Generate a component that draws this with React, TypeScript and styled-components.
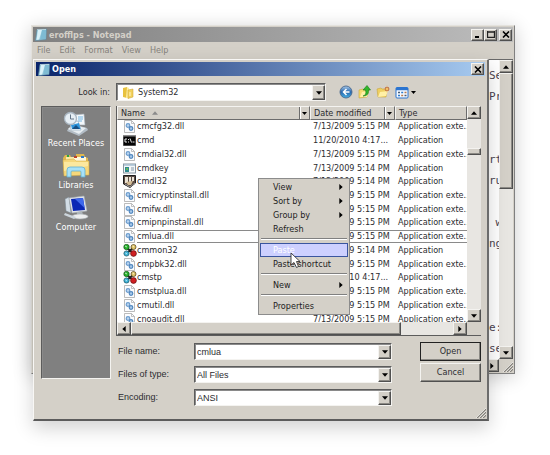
import React from "react";
import styled, { createGlobalStyle, css } from "styled-components";

const face = "#d4d0c8";
const ui = `"DejaVu Sans Condensed", "Noto Sans", sans-serif`;
const sans = `"Liberation Sans", Arial, sans-serif`;

const Global = createGlobalStyle`
  *, *::before, *::after { box-sizing: border-box; }
  body { margin: 0; background: #fff; font: 9px/13px ${ui}; color: #2c2c30; }
  button, input, select { font: inherit; color: inherit; margin: 0; padding: 0; }
  svg { display: block; flex: none; }
`;

const raised = css`
  background: ${face};
  border: 1px solid;
  border-color: #f4f3f0 #505050 #505050 #f4f3f0;
  box-shadow: inset -1px -1px 0 #8c8a85;
`;

const sunken = css`
  background: #fff;
  border: 1px solid;
  border-color: #5c5c5c #f4f3f0 #f4f3f0 #5c5c5c;
  box-shadow: inset 1px 1px 0 #8a8a8a;
`;

const Desktop = styled.main`
  position: relative;
  min-height: 455px;
  padding: 25px 35px 0 31px;
`;

const NotepadWindow = styled.section`
  display: flex;
  flex-direction: column;
  min-height: 348px;
  padding: 1px;
  background: ${face};
  border: 1px solid;
  border-color: #e4e2dd #808080 #808080 #e4e2dd;
  box-shadow: 0 3px 18px rgba(0, 0, 0, 0.2);
`;

const DialogWindow = styled.section`
  position: absolute;
  top: 59px;
  left: 33px;
  right: 61px;
  padding: 2px;
  background: ${face};
  border: solid;
  border-width: 1px 2px 2px 1px;
  border-color: #f8f7f5 #6c6c6c #5c5c5c #f8f7f5;
  box-shadow: 0 7px 18px rgba(0, 0, 0, 0.18);
`;

const TitleBar = styled.header<{ $active?: boolean }>`
  display: flex;
  align-items: center;
  gap: 2px;
  height: ${(p) => (p.$active ? 14 : 15)}px;
  padding: 0 1px 0 2px;
  color: ${(p) => (p.$active ? "#fff" : "#d4d0c8")};
  background: ${(p) =>
    p.$active
      ? "linear-gradient(90deg, #0a246a, #a6caf0)"
      : "linear-gradient(90deg, #808080, #bdbdbd)"};
`;

const Title = styled.h1`
  flex: 1;
  margin: 0;
  font-size: 9px;
  line-height: 14px;
  font-weight: bold;
`;

const CaptionButton = styled.button<{ $spaced?: boolean }>`
  ${raised}
  display: flex;
  align-items: center;
  justify-content: center;
  width: 13px;
  height: 12px;
  margin-left: ${(p) => (p.$spaced ? 0 : -2)}px;
`;

const MenuBar = styled.nav`
  display: flex;
  gap: 9px;
  height: 17px;
  padding: 1px 4px;
`;

const MenuButton = styled.button`
  border: 0;
  background: none;
  color: #85827c;
`;

const Client = styled.div`
  flex: 1;
  display: flex;
  min-height: 0;
  border: solid #6a6a6a;
  border-width: 1px 0 0;
`;

const EditorColumn = styled.div`
  flex: 1;
  display: flex;
  flex-direction: column;
  min-width: 0;
  background: #fff;
`;

const EditorText = styled.pre`
  flex: 1;
  height: 0;
  margin: 0;
  padding: 5px 0 0 calc(100% - 10px);
  overflow: hidden;
  font: 11px/21px "DejaVu Sans Mono", monospace;
  color: #4c4350;
`;

const ScrollColumn = styled.div`
  display: flex;
  flex-direction: column;
  width: 14px;
  background: #e8e6e2;
`;

const ScrollRow = styled.div`
  display: flex;
  height: 13px;
  background: #e8e6e2;
`;

const ScrollArrow = styled.button`
  ${raised}
  flex: none;
  display: flex;
  align-items: center;
  justify-content: center;
  width: 14px;
  height: 13px;
`;

const Track = styled.div<{ $lead: number; $thumb: number; $rest: number }>`
  flex: 1;
  display: grid;
  grid-template-rows: ${(p) => `${p.$lead}fr ${p.$thumb}fr ${p.$rest}fr`};
`;

const RowTrack = styled.div`
  flex: 1;
  display: grid;
  grid-template-columns: 273fr 53fr;
`;

const Thumb = styled.div`
  ${raised}
`;

const GripCorner = styled.div`
  display: flex;
  align-items: flex-end;
  justify-content: flex-end;
  height: 13px;
  background: ${face};
`;

const LookRow = styled.div`
  display: flex;
  align-items: center;
  padding: 7px 4px 5px 5px;
`;

const LookLabel = styled.label`
  width: 75px;
  padding-right: 6px;
  text-align: right;
`;

const Combo = styled.div<{ $fixed?: boolean }>`
  ${sunken}
  display: flex;
  align-items: center;
  flex: ${(p) => (p.$fixed ? "0 1 210px" : "1")};
  min-width: 0;
  height: ${(p) => (p.$fixed ? 18 : 17)}px;
  padding: 1px 0 0 ${(p) => (p.$fixed ? 5 : 2)}px;
  gap: 4px;
`;

const ComboSelect = styled.select<{ $sans?: boolean }>`
  flex: 1;
  min-width: 0;
  height: 14px;
  border: 0;
  background: none;
  appearance: none;
  outline: 0;
  font-family: ${(p) => (p.$sans ? sans : ui)};
`;

const ComboInput = styled.input`
  flex: 1;
  min-width: 0;
  height: 14px;
  border: 0;
  background: none;
  outline: 0;
  font-family: ${sans};
`;

const DropFace = styled.span`
  ${raised}
  flex: none;
  display: flex;
  align-items: center;
  justify-content: center;
  width: 13px;
  align-self: stretch;
`;

const Tools = styled.div`
  display: flex;
  align-items: center;
  gap: 5px;
  margin-left: 13px;
`;

const ToolButton = styled.button`
  display: flex;
  align-items: center;
  gap: 2px;
  border: 0;
  background: none;
`;

const DialogBody = styled.div`
  display: flex;
  gap: 5px;
  padding: 0 4px 11px 5px;
`;

const Places = styled.nav`
  ${sunken}
  width: 70px;
  align-self: flex-start;
  min-height: 273px;
  padding: 4px 0;
  background: #808080;
  display: flex;
  flex-direction: column;
  gap: 1px;
`;

const Place = styled.button`
  display: flex;
  flex-direction: column;
  align-items: center;
  gap: 1px;
  height: 41px;
  border: 0;
  background: none;
  color: #fff;
  white-space: nowrap;
`;

const Main = styled.div`
  flex: 1;
  min-width: 0;
`;

const ListBox = styled.div`
  border: solid #5c5c5c;
  border-width: 0 0 1px 1px;
  background: ${face};
`;

const ListTop = styled.div`
  display: flex;
  height: 216px;
`;

const ListView = styled.div`
  flex: 1;
  min-width: 0;
  overflow: hidden;
  background: #fff;
`;

const FileTable = styled.table`
  width: 100%;
  height: 220px;
  table-layout: fixed;
  border-spacing: 0;
`;

const HeadCell = styled.th<{ $width?: number }>`
  width: ${(p) => (p.$width ? `${p.$width}px` : "auto")};
  height: 14px;
  padding: 0 0 0 3px;
  font-weight: normal;
  text-align: left;
  background: ${face};
  border: 1px solid;
  border-color: #f4f3f0 #6c6c6c #6c6c6c #f4f3f0;
`;

const HeadContent = styled.div`
  display: flex;
  align-items: center;
  gap: 7px;
  height: 12px;
  line-height: 12px;
  white-space: nowrap;
`;

const HeadDrop = styled.span`
  display: flex;
  align-items: center;
  justify-content: center;
  width: 10px;
  height: 12px;
  margin-left: auto;
  border-left: 1px solid #6c6c6c;
  box-shadow: inset 1px 0 0 #fff;
`;

const Cell = styled.td<{ $focus?: boolean }>`
  padding: 0 0 0 3px;
  line-height: 11px;
  white-space: nowrap;
  border: solid ${(p) => (p.$focus ? "#8a8a8a" : "transparent")};
  border-width: 1px 0;
`;

const NameCell = styled(Cell)`
  padding-left: 5px;
  border-color: transparent;
`;

const NameContent = styled.div`
  display: flex;
  align-items: center;
  height: 11px;
`;

const IconSlot = styled.span`
  display: flex;
  justify-content: center;
  width: 15px;
  margin: -1px 0;
`;

const NameText = styled.span<{ $focus?: boolean }>`
  flex: 1;
  line-height: 11px;
  margin: -1px 0;
  border: solid ${(p) => (p.$focus ? "#8a8a8a" : "transparent")};
  border-width: 1px 0;
`;

const Corner = styled.div`
  width: 14px;
  background: ${face};
`;

const Form = styled.form`
  display: flex;
  gap: 28px;
  padding-top: 6px;
`;

const Fields = styled.div`
  flex: 1;
  display: grid;
  gap: 6px;
  padding-top: 1px;
`;

const Field = styled.div`
  display: flex;
  align-items: center;
`;

const FieldLabel = styled.label`
  width: 78px;
  padding-left: 2px;
  font-family: ${sans};
`;

const Actions = styled.div`
  display: flex;
  flex-direction: column;
  gap: 2px;
  width: 61px;
`;

const ActionButton = styled.button<{ $default?: boolean }>`
  ${raised}
  height: 19px;
  ${(p) => p.$default && css`border-color: #222;`}
`;

const DialogGrip = styled.div`
  position: absolute;
  right: 1px;
  bottom: 1px;
`;

const ContextMenu = styled.div`
  position: absolute;
  top: 178px;
  left: 258px;
  width: 92px;
  padding: 1px;
  background: ${face};
  border: 1px solid #8c8c8c;
`;

const ContextItem = styled.button<{ $selected?: boolean }>`
  display: flex;
  align-items: center;
  justify-content: space-between;
  width: 100%;
  height: 14px;
  padding: 0 4px 0 12px;
  border: 1px solid ${(p) => (p.$selected ? "#3a559f" : "transparent")};
  background: ${(p) => (p.$selected ? "#cdd0ff" : "none")};
  color: ${(p) => (p.$selected ? "#fff" : "#222")};
  line-height: 12px;
  white-space: nowrap;
`;

const Separator = styled.hr`
  height: 2px;
  margin: 2px 1px 3px;
  border: solid;
  border-width: 1px 0;
  border-color: #808080 #fff #fff;
`;

const Pointer = styled.div`
  position: absolute;
  top: 252px;
  left: 290px;
`;

const paths = {
  up: "M0 4L3.500 0L7 4Z",
  down: "M0 0H7L3.500 4Z",
  left: "M4 0V7L0 3.500Z",
  right: "M0 0V7L4 3.500Z",
};

function Arrow({ dir, size = 6, color = "#000" }: { dir: keyof typeof paths; size?: number; color?: string }) {
  const flat = dir === "up" || dir === "down";
  const short = Math.ceil((size * 4) / 7);
  return (
    <svg width={flat ? size : short} height={flat ? short : size} viewBox={flat ? "0 0 7 4" : "0 0 4 7"}>
      <path d={paths[dir]} fill={color} />
    </svg>
  );
}

const Cross = () => (
  <svg width="8" height="7" viewBox="0 0 8 7">
    <path d="M1 0.500L7 6.500M7 0.500L1 6.500" stroke="#000" strokeWidth="1.600" />
  </svg>
);

const Grip = () => (
  <svg width="11" height="11" viewBox="0 0 11 11">
    <path d="M2 11L11 2M5 11L11 5M8 11L11 8" stroke="#85827c" strokeWidth="1.300" />
    <path d="M1 11L11 1M4 11L11 4M7 11L11 7" stroke="#fff" strokeWidth="0.600" />
  </svg>
);

const NotepadIcon = () => (
  <svg width="12" height="13" viewBox="0 0 12 13">
    <path d="M2 1.500L11.500 1L11 11.500L0.500 12.500Z" fill="#9fd0e2" stroke="#5e8ba0" strokeWidth="0.700" />
    <path d="M3 2L7 2L4 11.500L1.500 12Z" fill="#d9f1f8" />
    <path d="M7 2L11 2L10.500 11L5 11.500Z" fill="#69aec9" opacity="0.600" />
    <path d="M2.500 1.500H11" stroke="#eef8fb" strokeDasharray="1 1" />
  </svg>
);

const FolderIcon = () => (
  <svg width="12" height="13" viewBox="0 0 12 13">
    <path d="M1 2L5 1V12L1 11Z" fill="#e8c23f" />
    <path d="M5 1L7 2V12.500L4 12Z" fill="#fff0a0" />
    <path d="M6 4L11 3V11L6 12.500Z" fill="#f2d15c" stroke="#c89f2c" strokeWidth="0.500" />
    <path d="M8 6V10" stroke="#fff7c9" />
  </svg>
);

const BackIcon = () => (
  <svg width="14" height="14" viewBox="0 0 14 14">
    <defs>
      <linearGradient id="back" x2="0" y2="1">
        <stop stopColor="#a9c9e8" />
        <stop offset="0.500" stopColor="#2767ae" />
        <stop offset="1" stopColor="#49b1e2" />
      </linearGradient>
    </defs>
    <circle cx="7" cy="7" r="6" fill="url(#back)" stroke="#49688c" strokeWidth="0.900" />
    <path d="M7.500 4L4.500 7L7.500 10M5 7H10.500" fill="none" stroke="#fff" strokeWidth="1.500" />
  </svg>
);

const UpIcon = () => (
  <svg width="13" height="14" viewBox="0 0 13 14">
    <path d="M1 5L5 4L6 5L11 5L9 12L1 13Z" fill="#f5db70" stroke="#c9a73c" strokeWidth="0.600" />
    <path d="M2 12L4 7L11 6L9 12Z" fill="#fff0a8" />
    <path d="M5 11Q9 10 7.500 5H5L9 0.500L12.500 5H10.500Q11 11 5 11Z" fill="#32b72c" stroke="#177a19" strokeWidth="0.600" />
  </svg>
);

const NewFolderIcon = () => (
  <svg width="14" height="14" viewBox="0 0 14 14">
    <path d="M1 4L5 3L6 4L11 4L10 12L2 12Z" fill="#efcf61" stroke="#c8a63d" strokeWidth="0.600" />
    <path d="M2 12L4 7L12 6L10 11Z" fill="#fff0a6" />
    <circle cx="11" cy="4" r="1.800" fill="#f7d36b" stroke="#b96a43" strokeWidth="1.100" />
    <path d="M11 0.500V7.500M7.500 4H14" stroke="#e9aa65" strokeWidth="0.500" />
  </svg>
);

const ViewsIcon = () => (
  <svg width="14" height="13" viewBox="0 0 13 13">
    <rect x="0.500" y="1.500" width="12" height="10.500" rx="1" fill="#f6faff" stroke="#2b74d0" />
    <path d="M0.500 3H12.500" stroke="#2b74d0" strokeWidth="2.500" />
    <path d="M2.500 6.500H4.500M9 9.500H11" stroke="#4a5e78" strokeWidth="1.600" />
    <path d="M5.700 6.500H7.700M2.500 9.500H4.500" stroke="#2d7acb" strokeWidth="1.600" />
    <path d="M9 6.500H11M5.700 9.500H7.700" stroke="#b47a52" strokeWidth="1.600" />
  </svg>
);

const RecentIcon = () => (
  <svg width="26" height="25" viewBox="0 0 26 25">
    <path d="M5 18L10 13L24 17L25 19L16 25L4 20Z" fill="#b3bdc6" />
    <path d="M5 18L10 14L23 17L16 23Z" fill="#e7edf1" />
    <path d="M10 4L21 3L22 14L11 14Z" fill="#f4f8fb" stroke="#a2acb5" strokeWidth="0.600" />
    <path d="M15 6H20M15 8H20M15 10H19" stroke="#72b4e0" />
    <path d="M7 11L15 10L18 19L8 19Z" fill="#f5fbff" stroke="#8ba5ba" strokeWidth="0.600" />
    <path d="M8 14L16 12L17.500 18L9 18Z" fill="#2e95db" />
    <path d="M9 18L13 14L17 18Z" fill="#174f83" />
    <circle cx="7.500" cy="7.500" r="6" fill="#e7eff5" stroke="#a8b5c0" strokeWidth="1.300" />
    <path d="M7.500 3.500V8H11" fill="none" stroke="#647789" />
  </svg>
);

const LibrariesIcon = () => (
  <svg width="28" height="25" viewBox="0 0 28 25">
    <path d="M1 5L3 2H8L9 4H14V1H22L23 4L26 5V22H2Z" fill="#dfb74f" />
    <path d="M4 4H12V8H4Z" fill="#f9e9a8" />
    <path d="M12 4H24V9H12Z" fill="#fff8dc" />
    <path d="M5 3H7" stroke="#2ba343" strokeWidth="2" />
    <path d="M12 4H15" stroke="#bb4229" strokeWidth="2" />
    <path d="M19 4H22" stroke="#2d79cc" strokeWidth="2" />
    <path d="M1 7L12 6L14 8H27V22L2 23Z" fill="#f6d77b" stroke="#d2a83f" strokeWidth="0.500" />
    <path d="M2 9H26V13L2 18Z" fill="#fff0af" opacity="0.700" />
    <path d="M5 24V17Q5 14 8 14H20Q23 14 23 17V24H19V19Q19 18 18 18H10Q9 18 9 19V24Z" fill="#a8e1f7" stroke="#5faed3" strokeWidth="0.800" />
  </svg>
);

const ComputerIcon = () => (
  <svg width="26" height="25" viewBox="0 0 26 25">
    <path d="M2 4L6 2L8 18L3 16Z" fill="#d3dde6" stroke="#77858f" strokeWidth="0.500" />
    <path d="M6 3L21 1L24 16L9 18Z" fill="#e2e5e8" stroke="#a2abb2" strokeWidth="0.600" />
    <path d="M8 4L20 3L22 15L10 16Z" fill="#0b27b5" />
    <path d="M12 4L20 3L21.500 13Z" fill="#3e68ec" />
    <path d="M14 17L19 16L20 20H14Z" fill="#aeb6bb" />
    <ellipse cx="17" cy="21.500" rx="8" ry="2.500" fill="#eceeef" stroke="#a6adb1" strokeWidth="0.600" />
    <path d="M2 18L13 22L11 24L1 20Z" fill="#ccd5dc" />
  </svg>
);

type Kind = "dll" | "console" | "app" | "shield" | "balls";

function FileIcon({ kind }: { kind: Kind }) {
  if (kind === "console")
    return (
      <svg width="13" height="11" viewBox="0 0 13 11">
        <rect width="13" height="11" fill="#8b8b8b" />
        <rect x="0.500" y="1.500" width="12" height="9" fill="#050505" />
        <path d="M4 4H2V7H4M5.500 4V5M5.500 6.500V7.500M7 3.500L8.500 7.500M9.500 7H11.500" fill="none" stroke="#fff" strokeWidth="0.900" />
      </svg>
    );
  if (kind === "app")
    return (
      <svg width="13" height="11" viewBox="0 0 13 11">
        <rect x="0.500" y="1" width="12" height="9" fill="#f5f8f9" stroke="#8896a0" />
        <path d="M1 2H12" stroke="#a7c0d3" strokeWidth="1.500" />
        <rect x="2" y="4" width="4" height="5" fill="#318a8d" />
        <rect x="3" y="5" width="2" height="2" fill="#65b85b" />
        <path d="M8 5H11M8 7H11" stroke="#8398aa" />
      </svg>
    );
  if (kind === "shield")
    return (
      <svg width="13" height="13" viewBox="0 0 13 13">
        <path d="M0.500 0.500H12.500V8L7 12.500L0.500 9Z" fill="#5b4b43" stroke="#1d1d1d" />
        <path d="M2 2H5V8H2ZM6 2H8V7H6ZM9 2H11V6H9Z" fill="#ebe4d6" />
        <path d="M3 7L10 6L8 10L5 10Z" fill="#d4bd96" />
        <path d="M2 9L7 12L12 8" fill="none" stroke="#999" />
      </svg>
    );
  if (kind === "balls")
    return (
      <svg width="14" height="13" viewBox="0 0 14 13">
        <path d="M4 4L10 9M10 4L4 9" stroke="#222" strokeWidth="2" />
        <circle cx="3.500" cy="3" r="2.700" fill="#28b52c" stroke="#134d17" strokeWidth="0.700" />
        <circle cx="10.500" cy="3" r="2.500" fill="#e0c568" stroke="#4a3a14" strokeWidth="0.700" />
        <circle cx="3.500" cy="9.500" r="2.600" fill="#40b5d8" stroke="#164f61" strokeWidth="0.700" />
        <circle cx="10.500" cy="9.500" r="2.900" fill="#d01f22" stroke="#5f1010" strokeWidth="0.700" />
        <path d="M2 2L4 3M9.500 2L11 3M2.500 9L4 10" stroke="#fff" strokeWidth="0.700" />
      </svg>
    );
  return (
    <svg width="11" height="13" viewBox="0 0 11 13">
      <path d="M0.500 0.500H7.500L10.500 3.500V12.500H0.500Z" fill="#fbfcfe" stroke="#aaa" strokeWidth="0.800" />
      <path d="M7.500 0.500V3.500H10.500" fill="none" stroke="#aaa" strokeWidth="0.700" />
      <circle cx="4" cy="5.500" r="1.800" fill="#b9d4ee" stroke="#6c9ccd" strokeWidth="1.200" />
      <circle cx="7" cy="8.500" r="1.800" fill="#a9c9e8" stroke="#4f86be" strokeWidth="1.200" />
    </svg>
  );
}

const day = "7/13/2009 5:15 PM";
const earlier = "7/13/2009 5:14 PM";
const later = "11/20/2010 4:17...";
const app = "Application";
const ext = "Application exte..";

const files: { name: string; kind: Kind; date: string; type: string; focus?: boolean }[] = [
  { name: "cmcfg32.dll", kind: "dll", date: day, type: ext },
  { name: "cmd", kind: "console", date: later, type: app },
  { name: "cmdial32.dll", kind: "dll", date: day, type: ext },
  { name: "cmdkey", kind: "app", date: earlier, type: app },
  { name: "cmdl32", kind: "shield", date: earlier, type: app },
  { name: "cmicryptinstall.dll", kind: "dll", date: day, type: ext },
  { name: "cmifw.dll", kind: "dll", date: day, type: ext },
  { name: "cmipnpinstall.dll", kind: "dll", date: day, type: ext },
  { name: "cmlua.dll", kind: "dll", date: day, type: ext, focus: true },
  { name: "cmmon32", kind: "balls", date: earlier, type: app },
  { name: "cmpbk32.dll", kind: "dll", date: day, type: ext },
  { name: "cmstp", kind: "balls", date: later, type: app },
  { name: "cmstplua.dll", kind: "dll", date: day, type: ext },
  { name: "cmutil.dll", kind: "dll", date: day, type: ext },
  { name: "cnoaudit.dll", kind: "dll", date: day, type: ext },
];

const documentText = ["Se", "Pr", "", "", "rt", "ru", "", " w", "ng", "", "", "", "e:", "se"].join("\n");

function Notepad() {
  return (
    <NotepadWindow>
      <TitleBar>
        <NotepadIcon />
        <Title>erofflps - Notepad</Title>
        <CaptionButton aria-label="Minimize">
          <svg width="7" height="7" viewBox="0 0 7 7"><path d="M1 6H5" stroke="#000" strokeWidth="2" /></svg>
        </CaptionButton>
        <CaptionButton aria-label="Maximize">
          <svg width="8" height="7" viewBox="0 0 8 7"><path d="M0.500 0V6.500H7.500V0M0 1H8" fill="none" stroke="#222" strokeWidth="1.300" /></svg>
        </CaptionButton>
        <CaptionButton aria-label="Close" $spaced><Cross /></CaptionButton>
      </TitleBar>
      <MenuBar>
        {["File", "Edit", "Format", "View", "Help"].map((m) => <MenuButton key={m}>{m}</MenuButton>)}
      </MenuBar>
      <Client>
        <EditorColumn>
          <EditorText>{documentText}</EditorText>
          <ScrollRow>
            <Track $lead={0} $thumb={0} $rest={1} />
            <ScrollArrow aria-label="Scroll right"><Arrow dir="right" /></ScrollArrow>
          </ScrollRow>
        </EditorColumn>
        <ScrollColumn>
          <ScrollArrow aria-label="Scroll up"><Arrow dir="up" /></ScrollArrow>
          <Track $lead={0} $thumb={115} $rest={155}><span /><Thumb /></Track>
          <ScrollArrow aria-label="Scroll down"><Arrow dir="down" /></ScrollArrow>
          <GripCorner><Grip /></GripCorner>
        </ScrollColumn>
      </Client>
    </NotepadWindow>
  );
}

function FileList() {
  return (
    <ListBox>
      <ListTop>
        <ListView>
          <FileTable>
            <thead>
              <tr>
                <HeadCell>
                  <HeadContent>Name <Arrow dir="up" size={6} color="#8a8a8a" /><HeadDrop><Arrow dir="down" size={5} /></HeadDrop></HeadContent>
                </HeadCell>
                <HeadCell $width={85}>
                  <HeadContent>Date modified<HeadDrop><Arrow dir="down" size={5} /></HeadDrop></HeadContent>
                </HeadCell>
                <HeadCell $width={72}><HeadContent>Type</HeadContent></HeadCell>
              </tr>
            </thead>
            <tbody>
              {files.map((f) => (
                <tr key={f.name}>
                  <NameCell>
                    <NameContent>
                      <IconSlot><FileIcon kind={f.kind} /></IconSlot>
                      <NameText $focus={f.focus}>{f.name}</NameText>
                    </NameContent>
                  </NameCell>
                  <Cell $focus={f.focus}>{f.date}</Cell>
                  <Cell $focus={f.focus}>{f.type}</Cell>
                </tr>
              ))}
            </tbody>
          </FileTable>
        </ListView>
        <ScrollColumn>
          <ScrollArrow aria-label="Scroll up"><Arrow dir="up" /></ScrollArrow>
          <Track $lead={29} $thumb={7} $rest={154}><span /><Thumb /></Track>
          <ScrollArrow aria-label="Scroll down"><Arrow dir="down" /></ScrollArrow>
        </ScrollColumn>
      </ListTop>
      <ScrollRow>
        <ScrollArrow aria-label="Scroll left"><Arrow dir="left" /></ScrollArrow>
        <RowTrack><Thumb /></RowTrack>
        <ScrollArrow aria-label="Scroll right"><Arrow dir="right" /></ScrollArrow>
        <Corner />
      </ScrollRow>
    </ListBox>
  );
}

function OpenDialog() {
  return (
    <DialogWindow role="dialog" aria-label="Open">
      <TitleBar $active>
        <NotepadIcon />
        <Title>Open</Title>
        <CaptionButton aria-label="Close"><Cross /></CaptionButton>
      </TitleBar>
      <LookRow>
        <LookLabel htmlFor="look">Look in:</LookLabel>
        <Combo $fixed>
          <FolderIcon />
          <ComboSelect id="look"><option>System32</option></ComboSelect>
          <DropFace><Arrow dir="down" /></DropFace>
        </Combo>
        <Tools>
          <ToolButton aria-label="Back"><BackIcon /></ToolButton>
          <ToolButton aria-label="Up one level"><UpIcon /></ToolButton>
          <ToolButton aria-label="New folder"><NewFolderIcon /></ToolButton>
          <ToolButton aria-label="Views"><ViewsIcon /><Arrow dir="down" size={5} /></ToolButton>
        </Tools>
      </LookRow>
      <DialogBody>
        <Places>
          <Place><RecentIcon />Recent Places</Place>
          <Place><LibrariesIcon />Libraries</Place>
          <Place><ComputerIcon />Computer</Place>
        </Places>
        <Main>
          <FileList />
          <Form onSubmit={(e) => e.preventDefault()}>
            <Fields>
              <Field>
                <FieldLabel htmlFor="name">File name:</FieldLabel>
                <Combo><ComboInput id="name" defaultValue="cmlua" /><DropFace><Arrow dir="down" /></DropFace></Combo>
              </Field>
              <Field>
                <FieldLabel htmlFor="type">Files of type:</FieldLabel>
                <Combo><ComboSelect id="type" $sans><option>All Files</option></ComboSelect><DropFace><Arrow dir="down" /></DropFace></Combo>
              </Field>
              <Field>
                <FieldLabel htmlFor="encoding">Encoding:</FieldLabel>
                <Combo><ComboSelect id="encoding" $sans><option>ANSI</option></ComboSelect><DropFace><Arrow dir="down" /></DropFace></Combo>
              </Field>
            </Fields>
            <Actions>
              <ActionButton type="submit" $default>Open</ActionButton>
              <ActionButton type="button">Cancel</ActionButton>
            </Actions>
          </Form>
        </Main>
      </DialogBody>
      <DialogGrip><Grip /></DialogGrip>
    </DialogWindow>
  );
}

export default function App() {
  return (
    <Desktop>
      <Global />
      <Notepad />
      <OpenDialog />
      <ContextMenu role="menu">
        <ContextItem role="menuitem">View<Arrow dir="right" /></ContextItem>
        <ContextItem role="menuitem">Sort by<Arrow dir="right" /></ContextItem>
        <ContextItem role="menuitem">Group by<Arrow dir="right" /></ContextItem>
        <ContextItem role="menuitem">Refresh</ContextItem>
        <Separator />
        <ContextItem role="menuitem" $selected>Paste</ContextItem>
        <ContextItem role="menuitem">Paste shortcut</ContextItem>
        <Separator />
        <ContextItem role="menuitem">New<Arrow dir="right" /></ContextItem>
        <Separator />
        <ContextItem role="menuitem">Properties</ContextItem>
      </ContextMenu>
      <Pointer>
        <svg width="13" height="17" viewBox="0 0 13 17">
          <path d="M1 1V13L4 10.500L6.500 15.500L8.500 14.500L6.500 9.500H10Z" fill="#fff" stroke="#333" strokeWidth="0.900" />
        </svg>
      </Pointer>
    </Desktop>
  );
}
